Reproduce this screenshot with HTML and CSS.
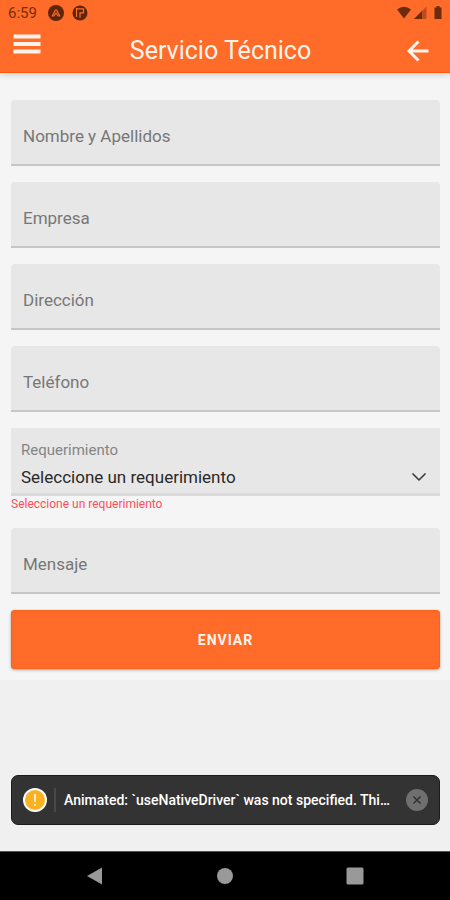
FILE: index.html
```html
<!DOCTYPE html>
<html lang="es">
<head>
<meta charset="utf-8">
<meta name="viewport" content="width=device-width, initial-scale=1">
<title>Servicio Técnico</title>
<link rel="stylesheet" href="styles.css">
</head>
<body>
<header class="header">
  <div class="status">
    <span class="clock">6:59</span>
    <svg class="status-app" width="16" height="16" viewBox="0 0 16 16" aria-hidden="true"><circle cx="8" cy="8" r="8"/><path class="mark" d="M4 11.500 7.400 5h1.200l3.400 6.500M5.500 11.500 8 8l2.500 3.500"/></svg>
    <svg class="status-app" width="16" height="16" viewBox="0 0 16 16" aria-hidden="true"><circle cx="8" cy="8" r="7.5"/><path class="mark" d="M4.500 3v9M4.500 3.800h7v4H8v5"/></svg>
    <svg class="status-system" width="47" height="16" viewBox="0 0 47 16" aria-hidden="true"><path d="M1 4.500Q8 -1 15 4.500L8 13.500Z"/><path d="M18 14 30.500 1.500V14Z" opacity=".45"/><path d="M18 14 26 6v8Z"/><path d="M38.500 2.500h2V1h3v1.500h2V14h-7Z"/></svg>
  </div>
  <div class="toolbar">
    <button class="icon-button menu" type="button" aria-label="Menú"><svg width="28" height="20" viewBox="0 0 28 20"><path d="M.5 2.500h27M.5 10h27M.5 17.500h27"/></svg></button>
    <h1 class="title">Servicio Técnico</h1>
    <button class="icon-button back" type="button" aria-label="Volver"><svg width="22" height="22" viewBox="0 0 22 22"><path d="M21.500 11H2M11.500 1.500 2 11l9.500 9.500"/></svg></button>
  </div>
</header>
<main class="content">
  <form class="form">
    <div class="field"><label for="nombre">Nombre y Apellidos</label><input id="nombre" type="text"></div>
    <div class="field"><label for="empresa">Empresa</label><input id="empresa" type="text"></div>
    <div class="field"><label for="direccion">Dirección</label><input id="direccion" type="text"></div>
    <div class="field"><label for="telefono">Teléfono</label><input id="telefono" type="tel"></div>
    <div class="choice">
      <div class="picker">
        <label for="requerimiento">Requerimiento</label>
        <select id="requerimiento" aria-describedby="requerimiento-error"><option>Seleccione un requerimiento</option></select>
        <svg class="chevron" width="16" height="10" viewBox="0 0 16 10" aria-hidden="true"><path d="M1.500 1.500 8 8l6.500-6.500"/></svg>
      </div>
      <p class="error" id="requerimiento-error">Seleccione un requerimiento</p>
    </div>
    <div class="field"><label for="mensaje">Mensaje</label><input id="mensaje" type="text"></div>
    <button class="submit" type="submit">ENVIAR</button>
  </form>
</main>
<aside class="toast">
  <svg width="24" height="24" viewBox="0 0 24 24" aria-hidden="true"><circle cx="12" cy="12" r="12" fill="#fff"/><circle cx="12" cy="12" r="10" fill="#fbb120"/><path d="M12 6v8M12 16v2" stroke="#fff" stroke-width="1.500"/></svg>
  <span class="divider"></span>
  <span class="message">Animated: `useNativeDriver` was not specified. Thi…</span>
  <button class="dismiss" type="button" aria-label="Cerrar"><svg width="22" height="22" viewBox="0 0 22 22"><circle cx="11" cy="11" r="11" fill="#6f6f6f"/><path d="m7.500 7.500 7 7m0-7-7 7" stroke="#333" stroke-width="1.500"/></svg></button>
</aside>
<nav class="navbar">
  <button type="button" aria-label="Atrás"><svg width="18" height="18" viewBox="0 0 18 18"><path d="M1 9 16 .5v17Z"/></svg></button>
  <button type="button" aria-label="Inicio"><svg width="18" height="18" viewBox="0 0 18 18"><circle cx="9" cy="9" r="8"/></svg></button>
  <button type="button" aria-label="Recientes"><svg width="18" height="18" viewBox="0 0 18 18"><rect x=".5" y=".5" width="17" height="17" rx="1.500"/></svg></button>
</nav>
</body>
</html>
```
FILE: styles.css
```css
* { box-sizing: border-box; }

body {
  margin: 0;
  min-height: 100vh;
  display: flex;
  flex-direction: column;
  background: #f0f0f0;
  font-family: Roboto, "Liberation Sans", sans-serif;
  color: #222;
}

button {
  border: 0;
  padding: 0;
  background: none;
  font: inherit;
  cursor: pointer;
}

svg { display: block; }

.header {
  position: relative;
  background: #ff6b28;
  border-bottom: 1px solid #ff5a0c;
  box-shadow: 0 2px 6px rgba(0, 0, 0, 0.16);
}

.status {
  display: flex;
  align-items: center;
  gap: 8px;
  height: 26px;
  padding: 0 7px 0 8px;
  color: #75300f;
}

.clock {
  width: 32px;
  font-size: 15px;
}

.status-app { fill: #5d260c; }

.mark {
  fill: none;
  stroke: #ff6b28;
  stroke-width: 1.2;
}

.status-system {
  margin-left: auto;
  fill: #6b2b0d;
}

.toolbar {
  display: grid;
  grid-template-columns: 40px 1fr 48px;
  height: 46px;
  padding: 3px 8px 0 7px;
}

.title {
  margin: 0;
  align-self: center;
  text-align: center;
  font-size: 25px;
  font-weight: 400;
  line-height: 32px;
  color: #fff4ec;
}

.icon-button {
  display: flex;
  justify-content: center;
  align-items: center;
  fill: none;
  stroke: #fff4ec;
  stroke-width: 4;
}

.menu { height: 30px; }
.back { stroke-width: 3; }

.content {
  flex: 1;
}

.form {
  display: flex;
  flex-direction: column;
  gap: 16px;
  padding: 27px 10px 11px 11px;
  background: #f5f5f5;
}

.field {
  display: grid;
  height: 66px;
}

.field label,
.field input {
  grid-area: 1 / 1;
}

.field label {
  z-index: 1;
  align-self: center;
  padding: 6px 12px 0;
  font-size: 17px;
  line-height: 20px;
  color: #777;
  pointer-events: none;
}

.field input {
  width: 100%;
  border: 0;
  border-bottom: 2px solid #c6c6c6;
  border-radius: 4px 4px 0 0;
  padding: 6px 12px 0;
  background: #e7e7e7;
  font: inherit;
  font-size: 17px;
}

.field:focus-within label {
  align-self: start;
  font-size: 15px;
}

.picker {
  display: grid;
  grid-template-columns: 1fr auto;
  align-items: center;
  border-bottom: 3px solid #dadada;
  background: #e7e7e7;
}

.picker label {
  grid-area: 1 / 1;
  padding: 12px 10px 0;
  font-size: 15px;
  line-height: 20px;
  color: #858585;
}

.picker select {
  grid-area: 2 / 1 / 3 / 3;
  appearance: none;
  width: 100%;
  height: 33px;
  border: 0;
  padding: 0 40px 0 10px;
  background: transparent;
  font: inherit;
  font-size: 17px;
  color: #292929;
}

.chevron {
  grid-area: 2 / 2;
  margin-right: 13px;
  fill: none;
  stroke: #333;
  stroke-width: 1.5;
  pointer-events: none;
}

.error {
  margin: 0;
  font-size: 12px;
  line-height: 16px;
  color: #ff4d5c;
}

.submit {
  height: 59px;
  border-radius: 4px;
  background: #ff6b28;
  box-shadow: 0 1px 3px rgba(0, 0, 0, 0.35), inset 0 0 2px #f05400;
  font-size: 14px;
  font-weight: 700;
  letter-spacing: 1px;
  color: #fff4ec;
}

.toast {
  display: flex;
  align-items: center;
  height: 50px;
  margin: 0 10px 26px 11px;
  padding: 0 11px;
  border: 1px solid #1c1c1c;
  border-radius: 7px;
  background: #333;
  color: #fff;
}

.toast svg { flex: none; }

.divider {
  width: 2px;
  height: 24px;
  margin: 0 8px 0 7px;
  background: #484848;
}

.message {
  flex: 1;
  min-width: 0;
  font-size: 14px;
  font-weight: 500;
  white-space: nowrap;
}

.navbar {
  display: flex;
  justify-content: center;
  gap: 112px;
  height: 49px;
  border-top: 1px solid #555;
  background: #000;
  fill: #999;
}
```
